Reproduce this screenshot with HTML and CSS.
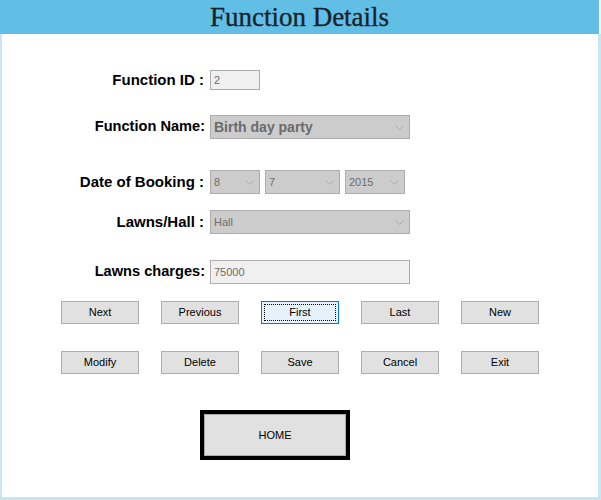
FILE: index.html
```html
<!DOCTYPE html>
<html>
<head>
<meta charset="utf-8">
<title>Function Details</title>
<link rel="stylesheet" href="styles.css">
</head>
<body>
<div class="window">
  <header class="titlebar"><h1 class="title">Function Details</h1></header>
  <main class="panel">
    <div class="row row-id">
      <label class="label">Function ID :</label>
      <div class="field field-id">2</div>
    </div>
    <div class="row row-name">
      <label class="label">Function Name:</label>
      <div class="combo combo-wide combo-bold"><span class="combo-text">Birth day party</span><span class="chev"><svg width="9" height="5" viewBox="0 0 9 5"><polyline points="0.5,0.5 4.5,4.5 8.5,0.5" fill="none" stroke="#a8a8a8" stroke-width="1"/></svg></span></div>
    </div>
    <div class="row row-date">
      <label class="label">Date of Booking :</label>
      <div class="combos">
        <div class="combo combo-day"><span class="combo-text">8</span><span class="chev"><svg width="9" height="5" viewBox="0 0 9 5"><polyline points="0.5,0.5 4.5,4.5 8.5,0.5" fill="none" stroke="#a8a8a8" stroke-width="1"/></svg></span></div>
        <div class="combo combo-month"><span class="combo-text">7</span><span class="chev"><svg width="9" height="5" viewBox="0 0 9 5"><polyline points="0.5,0.5 4.5,4.5 8.5,0.5" fill="none" stroke="#a8a8a8" stroke-width="1"/></svg></span></div>
        <div class="combo combo-year"><span class="combo-text">2015</span><span class="chev"><svg width="9" height="5" viewBox="0 0 9 5"><polyline points="0.5,0.5 4.5,4.5 8.5,0.5" fill="none" stroke="#a8a8a8" stroke-width="1"/></svg></span></div>
      </div>
    </div>
    <div class="row row-hall">
      <label class="label">Lawns/Hall :</label>
      <div class="combo combo-wide"><span class="combo-text">Hall</span><span class="chev"><svg width="9" height="5" viewBox="0 0 9 5"><polyline points="0.5,0.5 4.5,4.5 8.5,0.5" fill="none" stroke="#a8a8a8" stroke-width="1"/></svg></span></div>
    </div>
    <div class="row row-charges">
      <label class="label">Lawns charges:</label>
      <div class="field field-wide">75000</div>
    </div>
    <div class="buttons buttons-first">
      <button class="btn">Next</button>
      <button class="btn">Previous</button>
      <button class="btn btn-focus"><span class="focus-rect">First</span></button>
      <button class="btn">Last</button>
      <button class="btn">New</button>
    </div>
    <div class="buttons buttons-second">
      <button class="btn">Modify</button>
      <button class="btn">Delete</button>
      <button class="btn">Save</button>
      <button class="btn">Cancel</button>
      <button class="btn">Exit</button>
    </div>
    <div class="home-wrap">
      <button class="home">HOME</button>
    </div>
  </main>
</div>
</body>
</html>
```

FILE: styles.css
```css
html, body {
  margin: 0;
  padding: 0;
  background: #ffffff;
}

.window {
  width: 601px;
  height: 500px;
  display: flex;
  flex-direction: column;
  font-family: "Liberation Sans", Arial, sans-serif;
}

.titlebar {
  height: 34px;
  background: #61bee4;
  display: flex;
  align-items: center;
  justify-content: center;
  margin-right: 2px;
}

.title {
  margin: 0;
  font-family: "Liberation Serif", "Times New Roman", serif;
  font-weight: normal;
  font-size: 27px;
  color: #16222a;
  line-height: 34px;
  -webkit-text-stroke: 0.3px #16222a;
}

.panel {
  flex: 1;
  border-left: 2px solid #c6e6f2;
  border-right: 3px solid #c6e6f2;
  border-bottom: 3px solid #c6e6f2;
  display: flex;
  flex-direction: column;
}

.row {
  display: flex;
  align-items: center;
}

.row-id { margin-top: 36px; height: 20px; }
.row-name { margin-top: 25px; height: 24px; }
.row-date { margin-top: 31px; height: 24px; }
.row-hall { margin-top: 16px; height: 24px; }
.row-charges { margin-top: 26px; height: 24px; }

.label {
  width: 203px;
  box-sizing: border-box;
  padding-right: 1px;
  padding-bottom: 2px;
  text-align: right;
  font-weight: bold;
  font-size: 15px;
  color: #000;
  margin-right: 5px;
  white-space: nowrap;
}

.row-name .label,
.row-charges .label {
  font-size: 14.6px;
  padding-right: 0;
}

.field {
  box-sizing: border-box;
  height: 100%;
  background: #f0f0f0;
  border: 1px solid #adadad;
  font-size: 11px;
  color: #6d6d6d;
  display: flex;
  align-items: center;
  padding-left: 3px;
}

.field-id { width: 50px; }
.field-wide { width: 200px; }

.combos {
  display: flex;
  gap: 5px;
  height: 100%;
}

.combo {
  box-sizing: border-box;
  height: 100%;
  background: #cccccc;
  border: 1px solid #adadad;
  display: flex;
  align-items: center;
  font-size: 11px;
  color: #6d6d6d;
}

.combo-text {
  flex: 1;
  padding-left: 3px;
}

.combo-bold .combo-text {
  font-size: 14px;
  font-weight: bold;
  color: #6b6b6b;
  padding-left: 3px;
}

.chev {
  width: 19px;
  display: flex;
  justify-content: center;
  align-items: center;
}

.combo-wide { width: 200px; }
.combo-day { width: 50px; }
.combo-month { width: 75px; }
.combo-year { width: 60px; }

.buttons {
  display: flex;
  gap: 22px;
  padding-left: 59px;
}

.buttons-first { margin-top: 17px; }
.buttons-second { margin-top: 27px; }

.btn {
  width: 78px;
  height: 23px;
  box-sizing: border-box;
  background: #e1e1e1;
  border: 1px solid #adadad;
  font-family: "Liberation Sans", Arial, sans-serif;
  font-size: 11px;
  color: #000;
  padding: 0 0 2px 0;
  margin: 0;
}

.btn-focus {
  background: #e5f1fb;
  border-color: #0078d7;
  padding: 2px;
  display: flex;
}

.focus-rect {
  flex: 1;
  border: 1px dotted #000;
  display: flex;
  align-items: center;
  justify-content: center;
  padding-bottom: 1px;
}

.home-wrap {
  margin-top: 36px;
  padding-left: 198px;
}

.home {
  width: 150px;
  height: 50px;
  box-sizing: border-box;
  background: #e1e1e1;
  border: 4px solid #000;
  box-shadow: inset 0 0 0 1px #adadad;
  font-family: "Liberation Sans", Arial, sans-serif;
  font-size: 11px;
  color: #000;
  padding: 0;
  margin: 0;
}
```
